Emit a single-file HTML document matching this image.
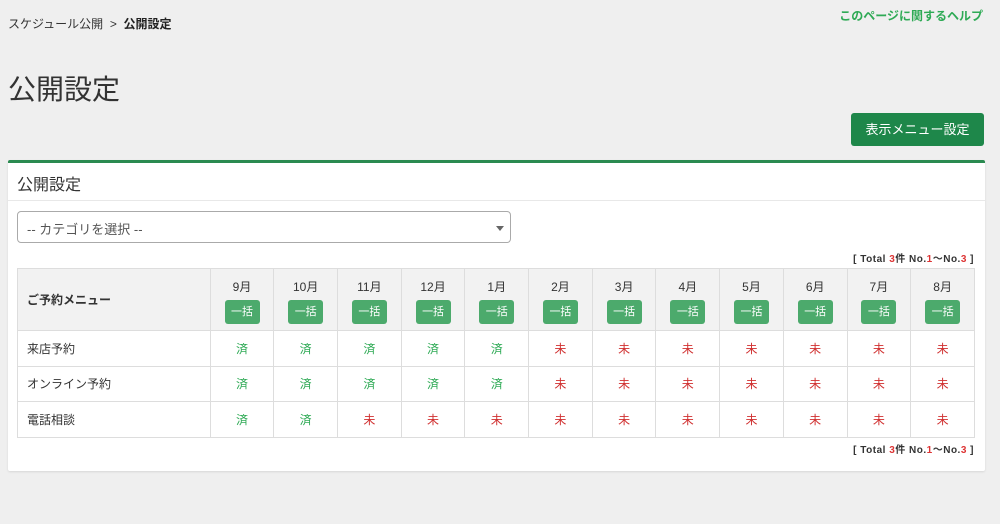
<!DOCTYPE html>
<html><head><meta charset="utf-8"><style>
*{box-sizing:border-box;margin:0;padding:0}
body{width:1000px;height:524px;background:#efefef;font-family:"Liberation Sans","Noto Sans CJK JP",sans-serif;color:#333;position:relative;overflow:hidden}
.bc{position:absolute;left:8px;top:15px;font-size:12px;color:#333}
.bc b{font-weight:bold;color:#222}
.help{position:absolute;right:17px;top:7px;font-size:12px;color:#2eaa55;font-weight:bold}
h1{position:absolute;left:8px;top:68px;font-size:28px;font-weight:normal;color:#333}
.btn{position:absolute;left:851px;top:113px;width:133px;height:33px;background:#1e874a;color:#fff;border-radius:3px;font-size:13px;text-align:center;line-height:33px}
.panel{position:absolute;left:8px;top:160px;width:977px;height:311px;background:#fff;border-top:3px solid #2a8a50;border-radius:2px;box-shadow:0 1px 2px rgba(0,0,0,.1)}
.ph{height:38px;border-bottom:1px solid #e8e8e8;font-size:16px;padding:8px 0 0 9px;color:#333}
.sel{position:absolute;left:9px;top:48px;width:494px;height:32px;border:1px solid #aaa;border-radius:4px;font-size:13px;color:#555;padding:7px 0 0 9px}
.sel:after{content:"";position:absolute;right:6px;top:14px;border:4px solid transparent;border-top:5px solid #666}
.tot{position:absolute;right:11px;font-size:10px;color:#333;letter-spacing:.5px;font-weight:bold}
.tot i{font-style:normal;color:#d33}
table{position:absolute;left:9px;top:105px;border-collapse:collapse;width:958px;font-size:12px}
td,th{border:1px solid #ddd;text-align:center}
th{background:#f2f2f2;font-weight:normal;height:62px;width:63.75px;vertical-align:top;padding-top:9px;font-size:12px}
th.f{width:193px;text-align:left;vertical-align:middle;padding:0 0 0 9px;font-weight:bold}
th span{display:block;margin:5px auto 0;width:35px;height:24px;background:#4caa6c;color:#fff;border-radius:3px;font-size:11px;line-height:24px}
td{height:35.5px}
td.l{text-align:left;padding-left:9px}
.g{color:#2eaa55}.r{color:#d03030}
</style></head><body>
<div class="bc">スケジュール公開 &nbsp;&gt;&nbsp; <b>公開設定</b></div>
<div class="help">このページに関するヘルプ</div>
<h1>公開設定</h1>
<div class="btn">表示メニュー設定</div>
<div class="panel">
<div class="ph">公開設定</div>
<div class="sel">-- カテゴリを選択 --</div>
<div class="tot" style="top:87px">[ Total <i>3</i>件 No.<i>1</i>〜No.<i>3</i> ]</div>
<table>
<tr><th class="f">ご予約メニュー</th><th>9月<span>一括</span></th><th>10月<span>一括</span></th><th>11月<span>一括</span></th><th>12月<span>一括</span></th><th>1月<span>一括</span></th><th>2月<span>一括</span></th><th>3月<span>一括</span></th><th>4月<span>一括</span></th><th>5月<span>一括</span></th><th>6月<span>一括</span></th><th>7月<span>一括</span></th><th>8月<span>一括</span></th></tr>
<tr><td class="l">来店予約</td><td class="g">済</td><td class="g">済</td><td class="g">済</td><td class="g">済</td><td class="g">済</td><td class="r">未</td><td class="r">未</td><td class="r">未</td><td class="r">未</td><td class="r">未</td><td class="r">未</td><td class="r">未</td></tr>
<tr><td class="l">オンライン予約</td><td class="g">済</td><td class="g">済</td><td class="g">済</td><td class="g">済</td><td class="g">済</td><td class="r">未</td><td class="r">未</td><td class="r">未</td><td class="r">未</td><td class="r">未</td><td class="r">未</td><td class="r">未</td></tr>
<tr><td class="l">電話相談</td><td class="g">済</td><td class="g">済</td><td class="r">未</td><td class="r">未</td><td class="r">未</td><td class="r">未</td><td class="r">未</td><td class="r">未</td><td class="r">未</td><td class="r">未</td><td class="r">未</td><td class="r">未</td></tr>
</table>
<div class="tot" style="top:278px">[ Total <i>3</i>件 No.<i>1</i>〜No.<i>3</i> ]</div>
</div>
</body></html>
